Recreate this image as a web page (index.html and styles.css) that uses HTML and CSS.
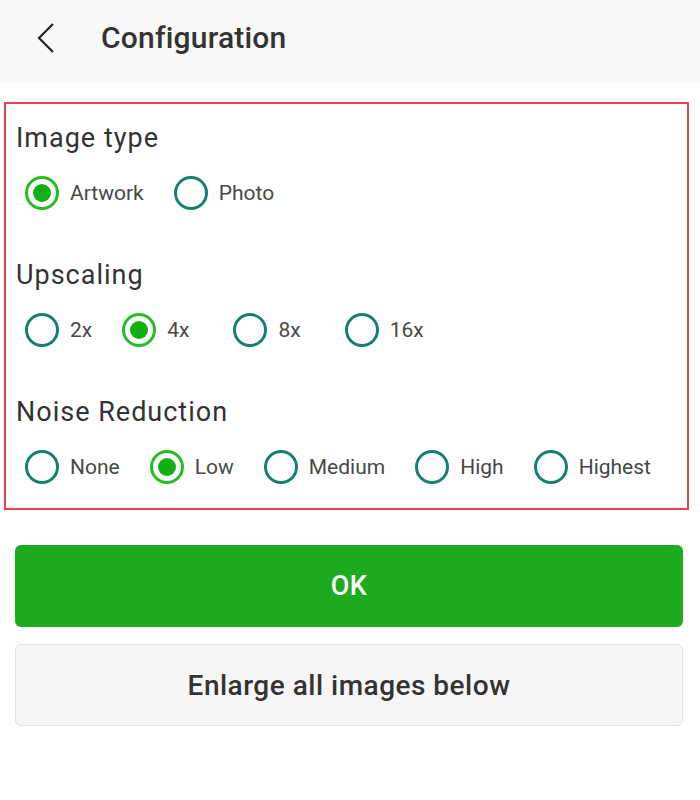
FILE: index.html
```html
<!DOCTYPE html>
<html lang="en">
  <head>
    <meta charset="UTF-8" />
    <meta name="viewport" content="width=device-width, initial-scale=1.0" />
    <title>Configuration</title>
    <link rel="stylesheet" href="styles.css">
  </head>
  <body>
    <!-- top bar -->
    <div class="topbar">
      <svg class="back" width="20" height="32" viewBox="0 0 20 32">
        <path d="M17 2 L3 16 L17 30" fill="none" stroke="#222" stroke-width="2.2" />
      </svg>
      <div class="title">Configuration</div>
    </div>

    <!-- options -->
    <div class="options">
      <div class="group">
        <div class="group-title">Image type</div>
        <div class="radio-row">
          <label class="radio checked"><span class="dot"></span>Artwork</label>
          <label class="radio"><span class="dot"></span>Photo</label>
        </div>
      </div>

      <div class="group">
        <div class="group-title">Upscaling</div>
        <div class="radio-row">
          <label class="radio"><span class="dot"></span>2x</label>
          <label class="radio checked wide"><span class="dot"></span>4x</label>
          <label class="radio wide"><span class="dot"></span>8x</label>
          <label class="radio"><span class="dot"></span>16x</label>
        </div>
      </div>

      <div class="group">
        <div class="group-title">Noise Reduction</div>
        <div class="radio-row">
          <label class="radio"><span class="dot"></span>None</label>
          <label class="radio checked"><span class="dot"></span>Low</label>
          <label class="radio"><span class="dot"></span>Medium</label>
          <label class="radio"><span class="dot"></span>High</label>
          <label class="radio"><span class="dot"></span>Highest</label>
        </div>
      </div>
    </div>

    <!-- buttons -->
    <div class="actions">
      <button class="btn btn-ok">OK</button>
      <button class="btn btn-plain">Enlarge all images below</button>
    </div>
  </body>
</html>
```

FILE: styles.css
```css
/* general */
body {
  margin: 0;
  padding: 0;
  font-family: Roboto, "Noto Sans", "Liberation Sans", sans-serif;
  background-color: #fff;
  color: #333;
}

/* top bar */
.topbar {
  display: flex;
  align-items: center;
  height: 82px;
  padding: 0 0 8px 36px;
  box-sizing: border-box;
  background-color: #f8f8f8;
}

.back {
  display: block;
  margin-top: 1px;
}

.title {
  margin-left: 45px;
  font-size: 30px;
  font-weight: 500;
  letter-spacing: 0.2px;
  color: #333;
}

/* options box */
.options {
  margin: 20px 11px 0 4px;
  padding: 19px 10px 23px;
  border: 2px solid #e8434a;
}

.group + .group {
  margin-top: 49px;
}

.group-title {
  font-size: 27px;
  line-height: 30px;
  letter-spacing: 1px;
  color: #333;
}

.radio-row {
  display: flex;
  align-items: center;
  margin: 22px 0 0 9px;
  height: 36px;
}

.radio {
  display: flex;
  align-items: center;
  margin-right: 30px;
  font-size: 21px;
  line-height: 36px;
  color: #484848;
}

.radio.wide {
  margin-right: 44px;
}

.dot {
  position: relative;
  width: 34px;
  height: 34px;
  margin-right: 11px;
  border: 3px solid #14806e;
  border-radius: 50%;
  box-sizing: border-box;
}

.radio.checked .dot {
  border-color: #24bd24;
}

.radio.checked .dot::after {
  content: "";
  position: absolute;
  left: 5px;
  top: 5px;
  width: 18px;
  height: 18px;
  border-radius: 50%;
  background-color: #12b012;
}

/* buttons */
.actions {
  display: flex;
  flex-direction: column;
  gap: 17px;
  margin: 35px 17px 0 15px;
}

.btn {
  height: 82px;
  border-radius: 6px;
  font-family: Roboto, "Noto Sans", "Liberation Sans", sans-serif;
  font-size: 28px;
  font-weight: 500;
  letter-spacing: 0.5px;
  cursor: pointer;
}

.btn-ok {
  border: none;
  background-color: #1fab1f;
  color: #fff;
  font-size: 27px;
}

.btn-plain {
  border: 1px solid #e4e4e4;
  background-color: #f6f6f6;
  color: #333;
}
```
